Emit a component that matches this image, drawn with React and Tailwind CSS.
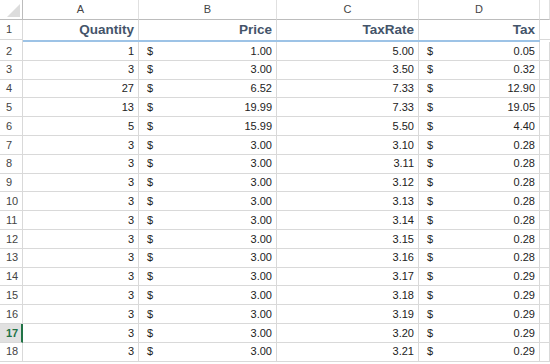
const rows = [
  [1, '1.00', '5.00', '0.05'],
  [3, '3.00', '3.50', '0.32'],
  [27, '6.52', '7.33', '12.90'],
  [13, '19.99', '7.33', '19.05'],
  [5, '15.99', '5.50', '4.40'],
  [3, '3.00', '3.10', '0.28'],
  [3, '3.00', '3.11', '0.28'],
  [3, '3.00', '3.12', '0.28'],
  [3, '3.00', '3.13', '0.28'],
  [3, '3.00', '3.14', '0.28'],
  [3, '3.00', '3.15', '0.28'],
  [3, '3.00', '3.16', '0.28'],
  [3, '3.00', '3.17', '0.29'],
  [3, '3.00', '3.18', '0.29'],
  [3, '3.00', '3.19', '0.29'],
  [3, '3.00', '3.20', '0.29'],
  [3, '3.00', '3.21', '0.29'],
];

const cols = 'grid grid-cols-[23px_116px_138px_142px_121px_1fr]';
const cell = 'border-r border-b border-[#d9d9d9] flex items-center';

function Money({ value }) {
  return (
    <div className={`${cell} justify-between pl-[8px] pr-[4px]`}>
      <span>$</span>
      <span>{value}</span>
    </div>
  );
}

export default function App() {
  return (
    <div className="w-[550px] h-[364px] overflow-hidden bg-white text-[11px] text-[#222] font-['Liberation_Sans',Arial,sans-serif]">
      <div className={`${cols} h-[20px] text-[#444]`}>
        <div className="relative border-r border-b border-[#bcbcbc]">
          <div className="absolute right-[2px] bottom-[2px] w-0 h-0 border-l-[13px] border-l-transparent border-b-[13px] border-b-[#dcdcdc]" />
        </div>
        {['A', 'B', 'C', 'D', ''].map((c, i) => (
          <div key={i} className="border-r border-b border-[#bcbcbc] border-r-[#e0e0e0] flex items-center justify-center">
            {c}
          </div>
        ))}
      </div>

      <div className={`${cols} h-[20px]`}>
        <div className="border-r border-b border-[#d9d9d9] text-[#444] flex items-center pl-[6px]">1</div>
        {['Quantity', 'Price', 'TaxRate', 'Tax'].map((h) => (
          <div key={h} className="border-r border-[#d9d9d9] flex items-center justify-end pr-[4px] font-bold text-[13.5px] text-[#44546a]">
            {h}
          </div>
        ))}
        <div className="border-b border-[#d9d9d9]" />
      </div>
      <div className={`${cols} h-[2px]`}>
        <div className="border-r border-[#d9d9d9]" />
        <div className="col-span-4 bg-[#9dc3e6]" />
        <div />
      </div>

      {rows.map((r, i) => {
        const n = i + 2;
        const sel = n === 17;
        return (
          <div key={n} className={`${cols} h-[18.8px]`}>
            <div
              className={`border-b border-[#d9d9d9] flex items-center pl-[6px] ${
                sel ? 'bg-[#e1e1e1] text-[#217346] font-bold border-r-2 border-r-[#217346]' : 'text-[#444] border-r'
              }`}
            >
              {n}
            </div>
            <div className={`${cell} justify-end pr-[4px]`}>{r[0]}</div>
            <Money value={r[1]} />
            <div className={`${cell} justify-end pr-[4px]`}>{r[2]}</div>
            <Money value={r[3]} />
            <div className={cell} />
          </div>
        );
      })}
    </div>
  );
}
